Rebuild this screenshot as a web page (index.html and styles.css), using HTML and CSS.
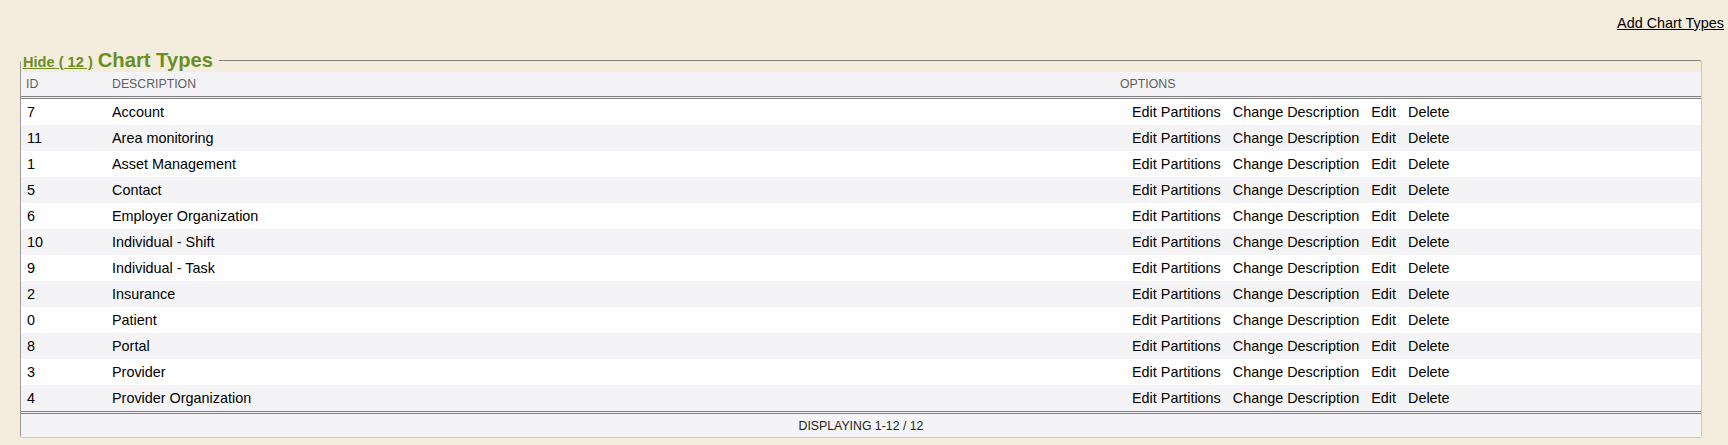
FILE: index.html
```html
<!DOCTYPE html>
<html>
<head>
<meta charset="utf-8">
<title>Chart Types</title>
<link rel="stylesheet" href="styles.css">
</head>
<body>
<div class="topbar"><a class="add-link" href="#">Add Chart Types</a></div>
<fieldset class="panel">
  <legend class="panel-legend"><a class="hide-link" href="#">Hide ( 12 )</a><span class="panel-title">Chart Types</span></legend>
  <table class="grid">
    <colgroup><col class="c-id"><col class="c-desc"><col class="c-opt"></colgroup>
    <thead>
      <tr><th>ID</th><th>DESCRIPTION</th><th>OPTIONS</th></tr>
    </thead>
    <tbody>
      <tr><td>7</td><td>Account</td><td class="opts"><a href="#">Edit Partitions</a><a href="#">Change Description</a><a href="#">Edit</a><a href="#">Delete</a></td></tr>
      <tr><td>11</td><td>Area monitoring</td><td class="opts"><a href="#">Edit Partitions</a><a href="#">Change Description</a><a href="#">Edit</a><a href="#">Delete</a></td></tr>
      <tr><td>1</td><td>Asset Management</td><td class="opts"><a href="#">Edit Partitions</a><a href="#">Change Description</a><a href="#">Edit</a><a href="#">Delete</a></td></tr>
      <tr><td>5</td><td>Contact</td><td class="opts"><a href="#">Edit Partitions</a><a href="#">Change Description</a><a href="#">Edit</a><a href="#">Delete</a></td></tr>
      <tr><td>6</td><td>Employer Organization</td><td class="opts"><a href="#">Edit Partitions</a><a href="#">Change Description</a><a href="#">Edit</a><a href="#">Delete</a></td></tr>
      <tr><td>10</td><td>Individual - Shift</td><td class="opts"><a href="#">Edit Partitions</a><a href="#">Change Description</a><a href="#">Edit</a><a href="#">Delete</a></td></tr>
      <tr><td>9</td><td>Individual - Task</td><td class="opts"><a href="#">Edit Partitions</a><a href="#">Change Description</a><a href="#">Edit</a><a href="#">Delete</a></td></tr>
      <tr><td>2</td><td>Insurance</td><td class="opts"><a href="#">Edit Partitions</a><a href="#">Change Description</a><a href="#">Edit</a><a href="#">Delete</a></td></tr>
      <tr><td>0</td><td>Patient</td><td class="opts"><a href="#">Edit Partitions</a><a href="#">Change Description</a><a href="#">Edit</a><a href="#">Delete</a></td></tr>
      <tr><td>8</td><td>Portal</td><td class="opts"><a href="#">Edit Partitions</a><a href="#">Change Description</a><a href="#">Edit</a><a href="#">Delete</a></td></tr>
      <tr><td>3</td><td>Provider</td><td class="opts"><a href="#">Edit Partitions</a><a href="#">Change Description</a><a href="#">Edit</a><a href="#">Delete</a></td></tr>
      <tr><td>4</td><td>Provider Organization</td><td class="opts"><a href="#">Edit Partitions</a><a href="#">Change Description</a><a href="#">Edit</a><a href="#">Delete</a></td></tr>
    </tbody>
    <tfoot>
      <tr><td colspan="3">DISPLAYING 1-12 / 12</td></tr>
    </tfoot>
  </table>
</fieldset>
</body>
</html>
```
FILE: styles.css
```css
html, body {
  margin: 0;
  padding: 0;
  background: #f4ecdd;
  font-family: "Liberation Sans", Arial, sans-serif;
  font-size: 14.4px;
  color: #000;
}

.topbar {
  text-align: right;
  padding: 15px 4px 0 0;
  line-height: 17px;
  height: 17px;
}

.add-link {
  color: #000;
  text-decoration: underline;
}

.panel {
  margin: 16px 26px 0 20px;
  padding: 0;
  border-top: 1px solid #808080;
  border-left: 1px solid #9a9a9a;
  border-right: 1px solid #c8c8c8;
  border-bottom: 1px solid #c8c8c8;
  border-radius: 3px;
  min-width: 0;
}

.panel-legend {
  box-sizing: border-box;
  padding: 2px 6px 0 2px;
  height: 24px;
  font-size: 20.2px;
  font-weight: bold;
  color: #6b8e23;
  display: flex;
  align-items: baseline;
}

.hide-link {
  color: #6b8e23;
  font-size: 14.6px;
  line-height: 1;
  text-decoration: underline;
}

.panel-title {
  font-size: 20.2px;
  line-height: 1;
  margin-left: 5px;
}

.grid {
  width: 100%;
  border-collapse: collapse;
  table-layout: fixed;
}

.c-id { width: 85px; }
.c-desc { width: 1008px; }

.grid th {
  background: #f4f4f6;
  color: #5e5e5e;
  font-size: 12.3px;
  font-weight: normal;
  text-align: left;
  height: 24px;
  padding: 0 6px;
  border-bottom: 3px double #808080;
}

.grid th:first-child { padding-left: 5px; }

.grid tbody td {
  height: 26px;
  padding: 0 6px;
  vertical-align: middle;
  white-space: nowrap;
}

.grid tbody tr:nth-child(odd) td { background: #ffffff; }
.grid tbody tr:nth-child(even) td { background: #f4f4f6; }

.opts a {
  color: #000;
  text-decoration: none;
  margin-left: 12px;
}

.grid tfoot td {
  background: #f4f4f6;
  border-top: 3px double #808080;
  height: 23px;
  padding: 0;
  font-size: 12.3px;
  color: #222;
  text-align: center;
  vertical-align: middle;
}
```
